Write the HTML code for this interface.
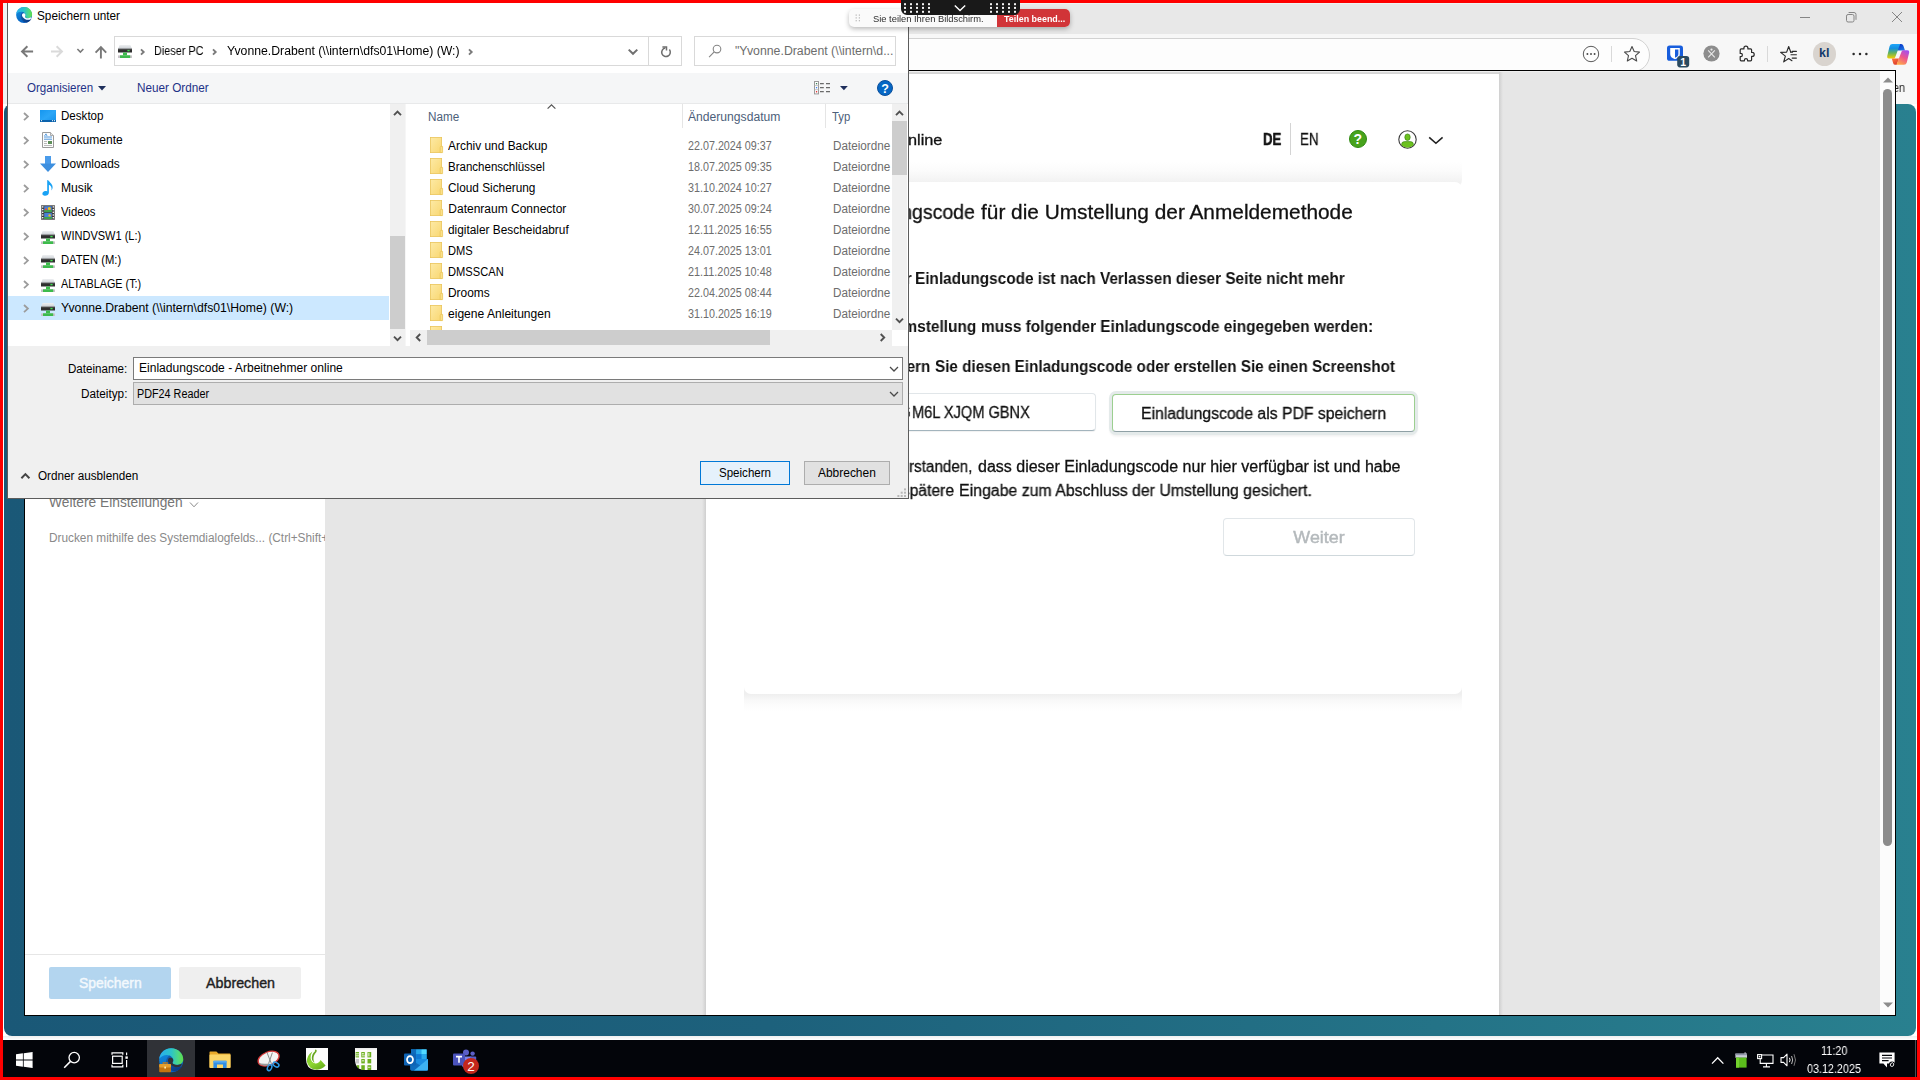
<!DOCTYPE html>
<html><head><meta charset="utf-8"><title>Speichern unter</title>
<style>
*{box-sizing:border-box;margin:0;padding:0}
html,body{width:1920px;height:1080px;overflow:hidden;background:#fff;font-family:"Liberation Sans",sans-serif;}
.a{position:absolute}
.t{position:absolute;white-space:nowrap;line-height:1;font-size:12px;color:#000}
svg{position:absolute;overflow:visible}
.g{will-change:transform}
</style></head><body>
<!-- ===== Edge window background ===== -->
<div class="a" style="left:0;top:0;width:1920px;height:1080px;background:#fff"></div>
<div class="a" id="edge-title" style="left:3px;top:3px;width:1914px;height:31px;background:#e8e8e8"></div>
<div class="a" id="edge-tool" style="left:3px;top:34px;width:1914px;height:36px;background:#f7f7f7"></div>
<!-- page behind print dialog -->
<div class="a" style="left:3px;top:70px;width:1914px;height:34px;background:#f7f7f7"></div>
<div class="a" id="teal" style="left:4px;top:104px;width:1912px;height:932px;border-radius:8px 8px 8px 8px;background:linear-gradient(90deg,#1a5877 0%,#1d617c 40%,#29808f 100%)"></div>
<div class="a" style="left:3px;top:3px;width:1914px;height:1px;background:#eef3f3"></div>
<svg style="left:1795px;top:8px" width="115" height="20" viewBox="0 0 115 20"><g fill="none" stroke="#858585" stroke-width="1"><path d="M5 9.5 H15"/><rect x="51.5" y="6.5" width="7.5" height="7.5" rx="1.6"/><path d="M53.6 4.5 H59 Q61 4.5 61 6.5 V11.8"/><path d="M97 4 L107 14 M107 4 L97 14"/></g></svg>
<div class="a" style="left:200px;top:38px;width:1450px;height:34px;border:1px solid #d2d2d2;border-radius:17px;background:#fdfdfd"></div>
<svg style="left:1582px;top:45px" width="18" height="18" viewBox="0 0 18 18"><circle cx="9" cy="9" r="7.7" fill="none" stroke="#5a5a5a" stroke-width="1"/><circle cx="5.4" cy="9" r="0.95" fill="#444"/><circle cx="9" cy="9" r="0.95" fill="#444"/><circle cx="12.6" cy="9" r="0.95" fill="#444"/></svg>
<div class="a" style="left:1611px;top:46px;width:1px;height:16px;background:#d9d9d9"></div>
<svg style="left:1623px;top:45px" width="18" height="18" viewBox="0 0 18 18"><path d="M9 1.6 L11.2 6.5 L16.5 7.1 L12.5 10.7 L13.7 16 L9 13.2 L4.3 16 L5.5 10.7 L1.5 7.1 L6.8 6.5 Z" fill="none" stroke="#4a4a4a" stroke-width="1.1" stroke-linejoin="round"/></svg>
<svg style="left:1666px;top:45.2px" width="24" height="23" viewBox="0 0 24 23"><rect x="1" y="0.6" width="16" height="15.2" rx="2.6" fill="#175ddc"/><path d="M4.2 3 H13.8 V9 Q13.8 12.8 9 14.2 Q4.2 12.8 4.2 9Z" fill="#fff"/><path d="M9 4.4 H12.4 V9 Q12.4 11.6 9 12.8Z" fill="#175ddc"/><rect x="11.2" y="11" width="12" height="11.4" rx="2.8" fill="#2a4a60"/></svg>
<span class="t" style="top:57px;left:1683.20px;transform:translateX(-50%);transform-origin:50% 0;font-size:10.5px;color:#fff;font-weight:700;">1</span>
<svg style="left:1702.6px;top:45.3px" width="17" height="17" viewBox="0 0 17 17"><circle cx="8.5" cy="8.5" r="8.1" fill="#8d8d8d"/><path d="M5.2 12.4 L11.8 5.4 M11.8 12.4 L5.2 5.4" stroke="#e8e8e8" stroke-width="1.1"/><circle cx="8.5" cy="4.6" r="1.1" fill="#e8e8e8"/></svg>
<svg style="left:1737.4px;top:45px" width="18" height="18" viewBox="0 0 18 18"><path d="M6.9 3.9 V3.2 Q6.9 1.2 8.9 1.2 Q10.9 1.2 10.9 3.2 V3.9 H13.6 Q14.6 3.9 14.6 4.9 V7.4 H15.2 Q17.2 7.4 17.2 9.4 Q17.2 11.4 15.2 11.4 H14.6 V14.8 Q14.6 15.8 13.6 15.8 H10.6 V15.2 Q10.6 13.6 9 13.6 Q7.4 13.6 7.4 15.2 V15.8 H4.2 Q3.2 15.8 3.2 14.8 V11.6 H3.8 Q5.4 11.6 5.4 10 Q5.4 8.4 3.8 8.4 H3.2 V4.9 Q3.2 3.9 4.2 3.9 Z" fill="none" stroke="#2a2a2a" stroke-width="1.2" stroke-linejoin="round"/></svg>
<div class="a" style="left:1767px;top:46px;width:1px;height:16px;background:#d9d9d9"></div>
<svg style="left:1777.6px;top:44.6px" width="20" height="19" viewBox="0 0 20 19"><path d="M12.76 7.17 L10.70 1.50 L8.64 7.17 L2.62 7.37 L7.37 11.08 L5.70 16.88 L10.70 13.50 L13.95 15.69" fill="none" stroke="#2a2a2a" stroke-width="1.15" stroke-linejoin="round" stroke-linecap="round"/><path d="M12.76 7.17 L14.57 7.23" fill="none" stroke="#2a2a2a" stroke-width="1.15" stroke-linecap="round"/><path d="M14.2 6.4 H18.4 M13 9.7 H18.4 M14.2 13.1 H18.4" stroke="#2a2a2a" stroke-width="1.15" stroke-linecap="round"/></svg>
<div class="a" style="left:1812.5px;top:42.2px;width:23.4px;height:23.4px;border-radius:50%;background:#d9d4cf"></div>
<span class="t" style="top:47px;left:1824.20px;transform:translateX(-50%);transform-origin:50% 0;font-size:12.5px;color:#123a6b;font-weight:700;">kl</span>
<svg style="left:1850px;top:51px" width="20" height="6"><circle cx="3.6" cy="3" r="1.25" fill="#2a2a2a"/><circle cx="10" cy="3" r="1.25" fill="#2a2a2a"/><circle cx="16.4" cy="3" r="1.25" fill="#2a2a2a"/></svg>
<svg style="left:1887px;top:43.6px" width="22.4" height="20.8" viewBox="0 0 22.4 20.8"><defs>
<linearGradient id="cpa" x1="0" y1="0" x2="0" y2="1"><stop offset="0" stop-color="#1fa6fa"/><stop offset=".3" stop-color="#1290e0"/><stop offset=".62" stop-color="#63b35e"/><stop offset="1" stop-color="#f2cf00"/></linearGradient>
<linearGradient id="cpb" x1="0.2" y1="0" x2="0.8" y2="1"><stop offset="0" stop-color="#0730c4"/><stop offset="1" stop-color="#1f7ae6"/></linearGradient>
<linearGradient id="cpc" x1="0.8" y1="0" x2="0.3" y2="1"><stop offset="0" stop-color="#a04df5"/><stop offset=".5" stop-color="#ef558c"/><stop offset="1" stop-color="#ffa848"/></linearGradient>
<linearGradient id="cpd" x1="0" y1="0" x2="0.6" y2="1"><stop offset="0" stop-color="#ff7a3c"/><stop offset="1" stop-color="#dc3a2c"/></linearGradient></defs>
<path d="M11 1.2 Q11.6 0 13 0 H14.2 Q15.8 0 16.4 1.8 L18 6.4 H10.4Z" fill="url(#cpb)"/>
<path d="M5.4 0 H13.2 L8.2 13.2 Q7.8 14.4 6.4 14.4 H1.8 Q-0.2 14.4 0.2 12.2 L2.6 2.2 Q3.2 0 5.4 0Z" fill="url(#cpa)"/>
<path d="M4.8 14.4 H12 L9.8 20.8 H8.2 Q6.6 20.8 6.2 19.2Z" fill="url(#cpd)"/>
<path d="M14.6 7.4 Q15 6.2 16.4 6.2 H20.4 Q22.6 6.2 22.2 8.4 L19.8 18.6 Q19.2 20.8 17 20.8 H9.4Z" fill="url(#cpc)"/>
</svg>
<span class="t g" style="top:82px;left:1893.30px;transform:scaleX(0.8908);transform-origin:0 0;color:#222;">en</span>
<!-- ===== Print dialog (in-page) ===== -->
<div class="a" id="print" style="left:24px;top:70px;width:1872px;height:946px;background:#e6e6e6;border:1px solid #000"></div>
<div class="a" id="print-left" style="left:25px;top:71px;width:300px;height:944px;background:#fff"></div>
<div class="a" style="left:25px;top:954px;width:300px;height:1px;background:#e6e6e6"></div>
<div class="a" style="left:49px;top:967px;width:122px;height:32px;background:#b3d5ef;border-radius:2px"></div>
<div class="a" style="left:179px;top:967px;width:122px;height:32px;background:#efefef;border-radius:2px"></div>
<!-- preview scrollbar -->
<div class="a" style="left:1880px;top:71px;width:15px;height:944px;background:#fcfcfc"></div>
<div class="a" style="left:1883px;top:89px;width:9px;height:757px;background:#8c8c8c;border-radius:5px"></div>
<svg style="left:1883px;top:77px" width="10" height="6"><path d="M0 5.5 L5 0.5 L10 5.5Z" fill="#8c8c8c"/></svg>
<svg style="left:1883px;top:1001.8px" width="10" height="6"><path d="M0 0.5 L5 5.5 L10 0.5Z" fill="#8c8c8c"/></svg>
<!-- preview page -->
<div class="a" style="left:25px;top:71px;width:1855px;height:1px;background:#efefef"></div>
<div class="a" style="left:706px;top:72px;width:793px;height:2px;background:linear-gradient(180deg,#dcdcdc,#d2d2d2)"></div>
<div class="a" id="pv" style="left:706px;top:74px;width:793px;height:941px;background:#fff"></div>
<span class="t" style="top:494px;left:49.30px;transform:scaleX(0.9179);transform-origin:0 0;font-size:15px;color:#767676;">Weitere Einstellungen</span>
<svg style="left:189px;top:500.7px" width="10" height="8"><path d="M1 1.5 L5 5.8 L9 1.5" fill="none" stroke="#8a8a8a" stroke-width="1"/></svg>
<div class="a" style="left:49px;top:528px;width:276px;height:20px;overflow:hidden"><span class="t" style="top:4px;left:0.40px;transform:scaleX(0.9849);transform-origin:0 0;color:#8a8a8a;">Drucken mithilfe des Systemdialogfelds... (Ctrl+Shift+P)</span></div>
<span class="t" style="top:976px;left:78.70px;transform:scaleX(0.9945);transform-origin:0 0;font-size:14px;color:#f3f9fd;-webkit-text-stroke:0.4px #f3f9fd;">Speichern</span>
<span class="t" style="top:976px;left:205.50px;transform:scaleX(1.0189);transform-origin:0 0;font-size:14px;color:#1f1f1f;-webkit-text-stroke:0.4px #1f1f1f;">Abbrechen</span>
<div class="a" style="left:1499px;top:72px;width:4px;height:943px;background:linear-gradient(90deg,#cfcfcf,#e6e6e6)"></div>
<div class="a" style="left:702px;top:72px;width:4px;height:943px;background:linear-gradient(270deg,#cfcfcf,#e6e6e6)"></div>
<span class="t g" style="top:132px;left:908.40px;transform:scaleX(1.0851);transform-origin:0 0;font-size:15px;color:#111;-webkit-text-stroke:0.3px #111;">nline</span>
<span class="t g" style="top:132px;left:1263.30px;transform:scaleX(0.8230);transform-origin:0 0;font-size:16px;color:#111;font-weight:700;-webkit-text-stroke:0.6px #111;">DE</span>
<div class="a" style="left:1290px;top:123px;width:1px;height:32px;background:#d4d4d4"></div>
<span class="t g" style="top:132px;left:1299.50px;transform:scaleX(0.8320);transform-origin:0 0;font-size:16px;color:#111;-webkit-text-stroke:0.3px #111;">EN</span>
<div class="a" style="left:1348.5px;top:129.5px;width:18.5px;height:18.5px;border-radius:50%;background:#47a31c;border:1.2px solid #2f8a12"></div>
<span class="t" style="top:132px;left:1357.80px;transform:translateX(-50%);transform-origin:50% 0;font-size:14px;color:#fff;font-weight:700;">?</span>
<svg style="left:1398px;top:129.5px" width="19" height="19" viewBox="0 0 19 19"><defs><clipPath id="uc"><circle cx="9.5" cy="9.5" r="8.2"/></clipPath></defs>
<circle cx="9.5" cy="9.5" r="8.7" fill="#fff" stroke="#3a3a3a" stroke-width="1.1"/>
<g clip-path="url(#uc)"><ellipse cx="9.5" cy="7.2" rx="2.7" ry="3.3" fill="#6cc11f" stroke="#2f7d0a" stroke-width="0.6"/><path d="M3.6 19 V14.4 Q3.6 11.6 6.6 11.6 H12.4 Q15.4 11.6 15.4 14.4 V19Z" fill="#6cc11f" stroke="#2f7d0a" stroke-width="0.6"/></g></svg>
<svg style="left:1428px;top:136px" width="16" height="9" viewBox="0 0 16 9"><path d="M1.2 1.3 L7.9 7.3 L14.6 1.3" fill="none" stroke="#222" stroke-width="1.6"/></svg>
<div class="a" style="left:744px;top:162px;width:718px;height:26px;border-radius:0 0 8px 8px;background:linear-gradient(180deg,#ffffff 0,#fbfbfb 9px,#f2f2f2 20px,#f2f2f2 26px)"></div>
<div class="a" style="left:744px;top:686px;width:718px;height:26px;background:linear-gradient(180deg,#efefef 0,#efefef 8px,#f8f8f8 14px,#fdfdfd 21px,#ffffff 26px)"></div>
<div class="a" style="left:744px;top:182px;width:718px;height:512px;background:#fff;border-radius:7px"></div>
<span class="t g" style="top:202px;left:980.50px;transform:scaleX(1.0164);transform-origin:0 0;font-size:20.5px;color:#111;-webkit-text-stroke:0.3px #111;">für die Umstellung der Anmeldemethode</span>
<span class="t g" style="top:202px;right:945.30px;transform:scaleX(0.9510);transform-origin:100% 0;font-size:20.5px;color:#111;-webkit-text-stroke:0.3px #111;">Einladungscode</span>
<span class="t g" style="top:271px;left:915.30px;transform:scaleX(0.9588);transform-origin:0 0;font-size:16px;color:#111;font-weight:700;">Einladungscode ist nach Verlassen dieser Seite nicht mehr</span>
<span class="t g" style="top:271px;right:1008.70px;transform:scaleX(0.9600);transform-origin:100% 0;font-size:16px;color:#111;font-weight:700;">Der</span>
<span class="t g" style="top:319px;left:980.60px;transform:scaleX(0.9651);transform-origin:0 0;font-size:16px;color:#111;font-weight:700;">muss folgender Einladungscode eingegeben werden:</span>
<span class="t g" style="top:319px;right:944.00px;transform:scaleX(0.9650);transform-origin:100% 0;font-size:16px;color:#111;font-weight:700;">Zur Umstellung</span>
<span class="t g" style="top:359px;left:935.00px;transform:scaleX(0.9527);transform-origin:0 0;font-size:16px;color:#111;font-weight:700;">Sie diesen Einladungscode oder erstellen Sie einen Screenshot</span>
<span class="t g" style="top:359px;right:990.00px;transform:scaleX(0.9530);transform-origin:100% 0;font-size:16px;color:#111;font-weight:700;">Speichern</span>
<div class="a" style="left:800px;top:393px;width:296px;height:38px;background:#fff;border:1px solid #e1e6e9;border-bottom-color:#a3b4bd;border-radius:4px;box-shadow:0 1px 1px rgba(0,0,0,.06)"></div>
<span class="t g" style="top:404px;left:911.70px;transform:scaleX(0.8841);transform-origin:0 0;font-size:16.5px;color:#111;-webkit-text-stroke:0.3px #111;">M6L XJQM GBNX</span>
<span class="t g" style="top:404px;right:1009.20px;transform:scaleX(0.8840);transform-origin:100% 0;font-size:16.5px;color:#111;-webkit-text-stroke:0.3px #111;">G</span>
<div class="a" style="left:1112px;top:394px;width:303px;height:38px;background:#fff;border:1px solid #9ccf90;border-bottom-color:#8fa0a5;border-radius:4px;box-shadow:0 0 0 3px #e4eaea, 0 2px 3px 2px rgba(0,0,0,.08)"></div>
<span class="t g" style="top:406px;left:1140.60px;transform:scaleX(0.9842);transform-origin:0 0;font-size:16px;color:#111;-webkit-text-stroke:0.3px #111;">Einladungscode als PDF speichern</span>
<span class="t g" style="top:459px;left:977.70px;font-size:16px;color:#111;-webkit-text-stroke:0.3px #111;">dass dieser Einladungscode nur hier verfügbar ist und habe</span>
<span class="t g" style="top:459px;right:947.70px;transform:scaleX(0.9500);transform-origin:100% 0;font-size:16px;color:#111;-webkit-text-stroke:0.3px #111;">Ich habe verstanden,</span>
<span class="t g" style="top:483px;left:959.00px;transform:scaleX(0.9923);transform-origin:0 0;font-size:16px;color:#111;-webkit-text-stroke:0.3px #111;">Eingabe zum Abschluss der Umstellung gesichert.</span>
<span class="t g" style="top:483px;right:965.80px;transform:scaleX(0.9800);transform-origin:100% 0;font-size:16px;color:#111;-webkit-text-stroke:0.3px #111;">ihn für die spätere</span>
<div class="a" style="left:1223px;top:518px;width:192px;height:38px;background:#fff;border:1px solid #e1e6e9;border-bottom-color:#cfd8dc;border-radius:4px"></div>
<span class="t g" style="top:529px;left:1319.00px;transform:translateX(-50%) scaleX(1.0500);transform-origin:50% 0;font-size:17px;color:#b4b9bc;-webkit-text-stroke:0.45px #b4b9bc;">Weiter</span>
<!-- ===== Taskbar ===== -->
<div class="a" style="left:3px;top:1036px;width:1914px;height:4px;background:linear-gradient(180deg,#efefef,#ffffff)"></div>
<div class="a" id="taskbar" style="left:3px;top:1040px;width:1914px;height:37px;background:#03050a"></div>
<div class="a" style="left:147px;top:1040px;width:48px;height:37px;background:#303237"></div>
<svg style="left:15.5px;top:1052px" width="17" height="16" viewBox="0 0 17 16"><g fill="#fff"><path d="M0 2.3 L6.9 1.3 V7.6 H0Z"/><path d="M7.7 1.2 L16.6 0 V7.6 H7.7Z"/><path d="M0 8.4 H6.9 V14.7 L0 13.7Z"/><path d="M7.7 8.4 H16.6 V16 L7.7 14.8Z"/></g></svg>
<svg style="left:63px;top:1051px" width="18" height="18" viewBox="0 0 18 18"><circle cx="11.2" cy="6.6" r="5.2" fill="none" stroke="#fff" stroke-width="1.3"/><path d="M7.5 10.4 L1.2 16.8" stroke="#fff" stroke-width="1.5"/></svg>
<svg style="left:111px;top:1052px" width="18" height="16" viewBox="0 0 18 16"><g fill="none" stroke="#fff" stroke-width="1.2"><rect x="1.6" y="4.2" width="9.6" height="7.2"/><path d="M1 2.8 V0.8 H11.8 V2.8 M1 12.8 V14.8 H11.8 V12.8"/><path d="M15.6 0.4 V3.2 M15.6 8 V15.2"/></g><rect x="14.4" y="4.4" width="2.4" height="2.4" fill="#fff"/></svg>
<svg style="left:159px;top:1048px" width="24.4" height="24.4" viewBox="0 0 16 16"><defs><linearGradient id="tea" x1="0" y1="0" x2="1" y2="0"><stop offset="0" stop-color="#2aaef0"/><stop offset=".5" stop-color="#2cc4c8"/><stop offset=".8" stop-color="#4fd982"/><stop offset="1" stop-color="#5fde45"/></linearGradient><linearGradient id="teb" x1="0" y1="0" x2="0.4" y2="1"><stop offset="0" stop-color="#1696e2"/><stop offset="1" stop-color="#0560c2"/></linearGradient><linearGradient id="tec" x1="0" y1="0" x2="1" y2="1"><stop offset="0" stop-color="#1562b4"/><stop offset="1" stop-color="#08347e"/></linearGradient></defs><circle cx="8" cy="8" r="7.9" fill="url(#teb)"/><path d="M0.15 7.2 C0.6 3 4 0.1 8 0.1 C12.6 0.1 16 3.6 15.9 7.6 C15.8 10 14 11 12.2 11 C10.6 11 9 10.6 8.9 9.6 C9.8 8.6 9.6 7.2 8.6 6 C7.2 4.4 4.4 4.2 2.4 5.2 C1.2 5.8 0.5 6.6 0.15 7.2Z" fill="url(#tea)"/><path d="M6.4 5.2 C4.8 6.4 4.2 8.6 4.9 10.8 C5.9 14 9 15.9 11.4 15.1 C13 14.5 14.4 13.2 15.2 11.9 C13.6 12.7 11.4 12.8 9.6 12 C7.4 11 6.2 9.2 6.6 7.4 C6.8 6.4 7.4 5.8 8 5.6 C7.5 5.2 6.9 5 6.4 5.2Z" fill="url(#tec)"/><path d="M5.9 8.2 C5.9 6.8 6.9 6 7.9 6.2 C8.9 6.4 9.5 7.4 9.3 8.4 C9.1 9.2 8.8 9.3 8.9 9.9 C9.1 10.7 10.6 11.2 12.2 11.1 C13.4 11 14.4 10.6 15 10.2 C14.9 10.9 14.7 11.5 14.4 12 C12.8 12.8 10.8 12.8 9.2 12 C7.2 11 5.9 9.6 5.9 8.2Z" fill="#303237"/></svg>
<svg style="left:159px;top:1062px" width="13" height="11" viewBox="0 0 13 11"><path d="M4.2 2.2 V0.9 H8.2 V2.2" fill="none" stroke="#c97c14" stroke-width="1.1"/><rect x="0.2" y="2" width="11.8" height="8.2" rx="1" fill="#c4740f"/><rect x="0.2" y="2" width="11.8" height="3.6" rx="1" fill="#e59f2e"/><rect x="5.3" y="4.6" width="1.7" height="1.9" fill="#ffe9a8"/></svg>
<svg style="left:209px;top:1051px" width="22" height="18" viewBox="0 0 22 18"><path d="M0.5 1.2 Q0.5 0.4 1.3 0.4 H7.4 L9.4 2.4 H20.7 Q21.5 2.4 21.5 3.2 V16.6 H0.5Z" fill="#e8a92a"/><rect x="0.5" y="3.6" width="21" height="13.4" rx="0.8" fill="#fbd568"/><path d="M4.4 17 V10.6 Q4.4 9.8 5.2 9.8 H16.8 Q17.6 9.8 17.6 10.6 V17 H14 V13.6 H8 V17Z" fill="#2f8de4"/><rect x="4.4" y="9.8" width="13.2" height="1.8" fill="#57aaf0"/></svg>
<svg style="left:257px;top:1049px" width="25" height="23" viewBox="0 0 25 23"><ellipse cx="11.6" cy="9.6" rx="11" ry="6.6" transform="rotate(-22 11.6 9.6)" fill="#f3f3f3" stroke="#d93a3a" stroke-width="1.3"/><path d="M1.6 13.6 Q4 17.6 11 16.6 L12.6 14.4 Q5 15.6 1.6 13.6Z" fill="#9a9a9a"/><path d="M10 3.6 L14.4 14.6 M15.4 3.6 L11.6 14.6" stroke="#8a8a8a" stroke-width="1"/><ellipse cx="12.6" cy="18.6" rx="2" ry="3.2" transform="rotate(25 12.6 18.6)" fill="none" stroke="#2e9be6" stroke-width="1.5"/><ellipse cx="19" cy="15.6" rx="2" ry="3.2" transform="rotate(-60 19 15.6)" fill="none" stroke="#2e9be6" stroke-width="1.5"/></svg>
<svg style="left:306px;top:1048px" width="22" height="22" viewBox="0 0 22 22"><defs><linearGradient id="ga" x1="0" y1="0" x2="0.6" y2="1"><stop offset="0" stop-color="#7cc52a"/><stop offset=".6" stop-color="#8fd833"/><stop offset="1" stop-color="#6db31e"/></linearGradient></defs>
<path d="M0 0 H22 V22 H9 Q0 21 0 11Z" fill="#fdfdfd"/>
<path d="M6.4 3.4 Q0 8 1 14 Q3 21.6 11 21.8 Q16 21.6 19.6 17.6 L14.6 12 Q12.8 15.6 9.4 15.4 Q5.2 14.6 4.6 10 Q4.4 6.6 6.4 3.4Z" fill="url(#ga)"/>
<path d="M9.4 1.4 Q11.4 1.8 10.4 4 Q6.6 8 7.6 12.6 Q8 14 9 14.4 Q6 14 5.8 10 Q5.8 6 9 3.2 Q8.6 2 9.4 1.4Z" fill="#6aa823"/>
</svg>
<svg style="left:355px;top:1048px" width="22" height="22" viewBox="0 0 22 22"><path d="M0 0 H22 V22 H7 Q0 20 0 13Z" fill="#fbfbf9"/><rect x="0" y="0" width="22" height="1.6" fill="#ebebeb"/>
<g fill="#6cb01e"><rect x="0.6" y="4" width="3.4" height="5.4"/><rect x="6.3" y="4" width="3.5" height="5.4"/><rect x="12.5" y="4" width="3.7" height="5.4"/><rect x="6.3" y="11" width="3.5" height="4.4"/><rect x="12.5" y="11" width="3.7" height="4.4"/><rect x="1.6" y="17.2" width="2.6" height="4.8"/><rect x="6.3" y="17.2" width="3.5" height="4.8"/><rect x="12.5" y="17.2" width="3.7" height="4.8"/></g>
<g fill="#f4f8ec"><rect x="0.6" y="5.4" width="3.4" height="0.9"/><rect x="0.6" y="7.4" width="3.4" height="0.9"/><rect x="7" y="5.2" width="1.8" height="1.2"/><rect x="7" y="7.4" width="2.8" height="0.9"/><rect x="13.4" y="4.8" width="1" height="3.6"/><rect x="7" y="12.4" width="2" height="0.9"/><rect x="13" y="18.8" width="2.4" height="0.9"/></g>
<rect x="0.6" y="11" width="3.4" height="4.4" fill="#c9c9c9"/><path d="M0 13 Q0 20 7 22 H0Z" fill="#03050a"/></svg>
<svg style="left:404px;top:1049px" width="24" height="22" viewBox="0 0 24 22"><rect x="7" y="0.4" width="15.6" height="14" fill="#1490df"/><rect x="7" y="0.4" width="5.2" height="4.8" fill="#0f6cbd"/><rect x="12.2" y="0.4" width="5.2" height="4.8" fill="#28a8ea"/><rect x="17.4" y="0.4" width="5.2" height="4.8" fill="#50d9ff"/><rect x="17.4" y="5.2" width="5.2" height="4.8" fill="#28a8ea"/><rect x="12.2" y="5.2" width="5.2" height="4.8" fill="#0f78d4"/>
<path d="M6.4 10.4 L24 10 V20 Q24 21.6 22.4 21.6 H8 Q6.4 21.6 6.4 20Z" fill="#1a8ce0"/><path d="M6.4 10.4 L24 21 Q23.6 21.6 22.4 21.6 H8 Q6.4 21.6 6.4 20Z" fill="#0f6cbd"/><path d="M24 10 L10 21.6 H22.4 Q24 21.6 24 20Z" fill="#3db2f2"/>
<rect x="0" y="4.6" width="12" height="12" rx="1" fill="#0f64b5"/><ellipse cx="6" cy="10.6" rx="3" ry="3.5" fill="none" stroke="#fff" stroke-width="1.7"/></svg>
<svg style="left:453px;top:1049px" width="26" height="26" viewBox="0 0 26 26"><circle cx="13" cy="3.4" r="3" fill="#5b5fc7"/><circle cx="19.6" cy="4.6" r="2.2" fill="#5b5fc7"/><path d="M8.8 7.6 H17.8 Q18.6 7.6 18.6 8.4 V14.4 Q18.6 19 13.4 19 Q8.8 19 8.8 14.4Z" fill="#7b83eb"/><path d="M17.2 7.6 H22.4 Q23.2 7.6 23.2 8.4 V13 Q23.2 16.4 20.2 16.4 Q18.2 16.4 17.2 14Z" fill="#5b5fc7"/><rect x="0" y="4.6" width="12" height="12" rx="1" fill="#4b53bc"/><path d="M3 7.6 H9 M6 7.6 V13.8" stroke="#fff" stroke-width="1.6"/><circle cx="18" cy="17" r="8" fill="#c4271b"/></svg>
<span class="t" style="top:1060px;left:471.00px;transform:translateX(-50%);transform-origin:50% 0;font-size:13.5px;color:#fff;">2</span>
<svg style="left:1710.5px;top:1055.5px" width="14" height="9"><path d="M1 7.6 L6.7 1.8 L12.4 7.6" fill="none" stroke="#fff" stroke-width="1.3"/></svg>
<svg style="left:1735px;top:1051.5px" width="13" height="16" viewBox="0 0 13 16"><rect x="0.4" y="1.6" width="11.6" height="4.2" fill="#c9ccd6"/><rect x="0.4" y="1.6" width="11.6" height="1.6" fill="#8e93a6"/><rect x="9.6" y="0.2" width="1" height="2" fill="#c9ccd6"/><rect x="1" y="5.6" width="10.6" height="10" fill="#5bbd1c"/><rect x="1" y="5.6" width="3" height="10" fill="#74d22e"/></svg>
<svg style="left:1757px;top:1053.5px" width="17" height="14" viewBox="0 0 17 14"><g fill="none" stroke="#fff" stroke-width="1.1"><path d="M4.6 1 H16 V9.4 H3.2 V4.6"/><path d="M9.4 9.4 V12.8 M6 12.9 H13"/><rect x="0.6" y="0.6" width="4" height="4"/></g><rect x="1.8" y="1.8" width="1.6" height="1.6" fill="#fff"/></svg>
<svg style="left:1780px;top:1053px" width="18" height="14" viewBox="0 0 18 14"><path d="M1 4.6 H3.6 L7 1.2 V12.8 L3.6 9.4 H1Z" fill="none" stroke="#fff" stroke-width="1.1" stroke-linejoin="round"/><path d="M9.4 4.8 Q10.8 7 9.4 9.2" fill="none" stroke="#fff" stroke-width="1"/><path d="M11.6 3 Q13.8 7 11.6 11" fill="none" stroke="#bfbfbf" stroke-width="1"/><path d="M14 1.2 Q17 7 14 12.8" fill="none" stroke="#7a7a7a" stroke-width="1"/></svg>
<span class="t g" style="top:1045px;left:1820.60px;transform:scaleX(0.9060);transform-origin:0 0;color:#fff;">11:20</span>
<span class="t g" style="top:1063px;left:1806.80px;transform:scaleX(0.8974);transform-origin:0 0;color:#fff;">03.12.2025</span>
<svg style="left:1879px;top:1052px" width="17" height="17" viewBox="0 0 17 17"><path d="M0.4 0.4 H15.6 V11.6 H8 L8 15.4 L4.4 11.6 H0.4Z" fill="#fff"/><path d="M3 3.4 H13 M3 6 H13 M3 8.6 H9.6" stroke="#03050a" stroke-width="1.1"/><circle cx="13" cy="12.6" r="3.1" fill="#03050a"/><path d="M11.4 13.8 Q10.6 11.2 13.6 10.6 Q15.6 11.6 14.4 13.8 Q13 15.2 11.4 13.8Z" fill="none" stroke="#fff" stroke-width="0.9"/></svg>
<div class="a" style="left:1915px;top:1040px;width:1px;height:37px;background:#4a4d53"></div>
<!-- ===== Save dialog ===== -->
<div class="a" id="dlg" style="left:7px;top:3px;width:902px;height:496px;background:#fff;border:1px solid #5c5c5c;border-top:none"></div>
<div class="a" style="left:3px;top:3px;width:4px;height:101px;background:#f0f1f1"></div>
<div class="a" style="left:8px;top:73px;width:900px;height:30px;background:#f5f6f7"></div>
<div class="a" style="left:8px;top:103px;width:900px;height:1px;background:#e8e9ea"></div>
<div class="a" style="left:8px;top:346px;width:900px;height:152px;background:#f0f0f0"></div>
<svg style="left:16px;top:7px" width="16.2" height="16.2" viewBox="0 0 16 16"><defs><linearGradient id="eda" x1="0" y1="0" x2="1" y2="0"><stop offset="0" stop-color="#2aaef0"/><stop offset=".5" stop-color="#2cc4c8"/><stop offset=".8" stop-color="#4fd982"/><stop offset="1" stop-color="#5fde45"/></linearGradient><linearGradient id="edb" x1="0" y1="0" x2="0.4" y2="1"><stop offset="0" stop-color="#1696e2"/><stop offset="1" stop-color="#0560c2"/></linearGradient><linearGradient id="edc" x1="0" y1="0" x2="1" y2="1"><stop offset="0" stop-color="#1562b4"/><stop offset="1" stop-color="#08347e"/></linearGradient></defs><circle cx="8" cy="8" r="7.9" fill="url(#edb)"/><path d="M0.15 7.2 C0.6 3 4 0.1 8 0.1 C12.6 0.1 16 3.6 15.9 7.6 C15.8 10 14 11 12.2 11 C10.6 11 9 10.6 8.9 9.6 C9.8 8.6 9.6 7.2 8.6 6 C7.2 4.4 4.4 4.2 2.4 5.2 C1.2 5.8 0.5 6.6 0.15 7.2Z" fill="url(#eda)"/><path d="M6.4 5.2 C4.8 6.4 4.2 8.6 4.9 10.8 C5.9 14 9 15.9 11.4 15.1 C13 14.5 14.4 13.2 15.2 11.9 C13.6 12.7 11.4 12.8 9.6 12 C7.4 11 6.2 9.2 6.6 7.4 C6.8 6.4 7.4 5.8 8 5.6 C7.5 5.2 6.9 5 6.4 5.2Z" fill="url(#edc)"/><path d="M5.9 8.2 C5.9 6.8 6.9 6 7.9 6.2 C8.9 6.4 9.5 7.4 9.3 8.4 C9.1 9.2 8.8 9.3 8.9 9.9 C9.1 10.7 10.6 11.2 12.2 11.1 C13.4 11 14.4 10.6 15 10.2 C14.9 10.9 14.7 11.5 14.4 12 C12.8 12.8 10.8 12.8 9.2 12 C7.2 11 5.9 9.6 5.9 8.2Z" fill="#fff"/></svg>
<span class="t" style="top:10px;left:37.00px;transform:scaleX(0.9795);transform-origin:0 0;">Speichern unter</span>
<svg style="left:20px;top:43.5px" width="100" height="16" viewBox="0 0 100 16">
<g fill="none" stroke-width="1.9" stroke-linecap="butt">
<path d="M13.1 7.5 H2 M7.4 2.2 L2 7.5 L7.4 12.8" stroke="#787878"/>
<path d="M31 7.5 H42 M36.6 2.2 L42 7.5 L36.6 12.8" stroke="#dadada"/>
<path d="M57.4 5 L60.4 8 L63.4 5" stroke="#7a7a7a" stroke-width="1.6"/>
<path d="M80.9 14.4 V3.2 M75.6 8.6 L80.9 3.2 L86.2 8.6" stroke="#787878"/>
</g></svg>
<div class="a" style="left:114px;top:36px;width:568px;height:30px;border:1px solid #d9d9d9;background:#fff"></div>
<div class="a" style="left:648px;top:37px;width:1px;height:28px;background:#d9d9d9"></div>
<svg style="left:118px;top:45px" width="14" height="13" viewBox="0 0 14 13"><defs><linearGradient id="dvg" x1="0" y1="0" x2="0" y2="1"><stop offset="0" stop-color="#eef0f2"/><stop offset="1" stop-color="#c9ced3"/></linearGradient></defs><path d="M1.6 0 H12.4 L14 3.9 H0Z" fill="url(#dvg)"/><rect x="0" y="3.8" width="14" height="3.7" fill="#2f2f2f"/><rect x="0" y="3.8" width="14" height="0.7" fill="#5a5a5a"/><rect x="9.4" y="4.9" width="2.2" height="1.4" fill="#3fe04f"/><rect x="5" y="7.5" width="4" height="3" fill="#3dbb4c"/><rect x="0" y="10.4" width="14" height="2.6" fill="#c9c3c9"/><rect x="2" y="10.3" width="10.2" height="2.7" fill="#3dbb4c"/></svg>
<svg style="left:139.8px;top:46.6px" width="8" height="10" viewBox="0 0 8 10"><path d="M1 2.3 L3.7 5 L1 7.7" fill="none" stroke="#7a7a7a" stroke-width="1.9"/></svg>
<span class="t g" style="top:45px;left:154.30px;transform:scaleX(0.9051);transform-origin:0 0;">Dieser PC</span>
<svg style="left:212.2px;top:46.6px" width="8" height="10" viewBox="0 0 8 10"><path d="M1 2.3 L3.7 5 L1 7.7" fill="none" stroke="#7a7a7a" stroke-width="1.9"/></svg>
<span class="t g" style="top:45px;left:227.00px;transform:scaleX(1.0207);transform-origin:0 0;">Yvonne.Drabent (\\intern\dfs01\Home) (W:)</span>
<svg style="left:467.8px;top:46.6px" width="8" height="10" viewBox="0 0 8 10"><path d="M1 2.3 L3.7 5 L1 7.7" fill="none" stroke="#7a7a7a" stroke-width="1.9"/></svg>
<svg style="left:627px;top:48.2px" width="12" height="8" viewBox="0 0 12 8"><path d="M1.7 1.6 L6 5.8 L10.3 1.6" fill="none" stroke="#707070" stroke-width="2"/></svg>
<svg style="left:659px;top:44px" width="14" height="14" viewBox="0 0 14 14"><path d="M6.25 3.97 A4.3 4.3 0 1 0 10.39 5.55" fill="none" stroke="#6e6e6e" stroke-width="1.5"/><path d="M3.4 2.9 H7.5 V6.6" fill="none" stroke="#6e6e6e" stroke-width="1.5"/></svg>
<div class="a" style="left:694px;top:36px;width:202px;height:30px;border:1px solid #d9d9d9;background:#fff"></div>
<svg style="left:708px;top:43.8px" width="14" height="14" viewBox="0 0 14 14"><circle cx="9" cy="5.1" r="3.8" fill="none" stroke="#858585" stroke-width="1.1"/><path d="M6.2 7.9 L1.1 13.2" stroke="#858585" stroke-width="1.1"/></svg>
<span class="t" style="top:45px;left:735.30px;transform:scaleX(1.0262);transform-origin:0 0;color:#6d6d6d;">"Yvonne.Drabent (\\intern\d...</span>
<span class="t" style="top:82px;left:26.50px;transform:scaleX(0.9636);transform-origin:0 0;color:#1e3287;">Organisieren</span>
<svg style="left:98px;top:85.5px" width="8" height="5"><path d="M0 0 H8 L4 4.6Z" fill="#1e2f5c"/></svg>
<span class="t" style="top:82px;left:137.30px;transform:scaleX(0.9772);transform-origin:0 0;color:#1e3287;">Neuer Ordner</span>
<svg style="left:814px;top:81px" width="17" height="14" viewBox="0 0 17 14">
<rect x="0.5" y="0.5" width="4" height="12.4" fill="#fff" stroke="#9a9a9a" stroke-width="1"/><path d="M0.5 4.6 H4.5 M0.5 8.7 H4.5" stroke="#b5b5b5" stroke-width="0.8"/>
<rect x="1.9" y="2" width="1.3" height="1.3" fill="#3f7f5a"/><rect x="1.9" y="6" width="1.3" height="1.3" fill="#3b82f6"/><rect x="1.9" y="10.1" width="1.3" height="1.3" fill="#e02424"/>
<g stroke="#6a6a6a" stroke-width="1.2"><path d="M6 2.6 H9.8 M12 2.6 H16 M6 6.6 H9.8 M12 6.6 H16 M6 10.6 H9.8 M12 10.6 H16"/></g></svg>
<svg style="left:839.6px;top:85.8px" width="9" height="5"><path d="M0 0 H7.8 L3.9 4.3Z" fill="#1e2f5c"/></svg>
<div class="a" style="left:877.1px;top:80px;width:16px;height:16px;border-radius:8px;background:#0667c4;border:1px solid #0b4f9c"></div>
<span class="t" style="top:83px;left:885.00px;transform:translateX(-50%);transform-origin:50% 0;font-size:12.5px;color:#fff;font-weight:700;">?</span>
<div class="a" style="left:8px;top:296px;width:381px;height:24px;background:#cce8ff"></div>
<svg style="left:23.3px;top:111.9px" width="8" height="10" viewBox="0 0 8 10"><path d="M1 1 L4.9 4.6 L1 8.2" fill="none" stroke="#9c9c9c" stroke-width="1.8"/></svg>
<span class="t" style="top:110px;left:61.30px;transform:scaleX(0.9652);transform-origin:0 0;">Desktop</span>
<svg style="left:23.3px;top:135.9px" width="8" height="10" viewBox="0 0 8 10"><path d="M1 1 L4.9 4.6 L1 8.2" fill="none" stroke="#9c9c9c" stroke-width="1.8"/></svg>
<span class="t" style="top:134px;left:61.30px;transform:scaleX(1.0053);transform-origin:0 0;">Dokumente</span>
<svg style="left:23.3px;top:159.9px" width="8" height="10" viewBox="0 0 8 10"><path d="M1 1 L4.9 4.6 L1 8.2" fill="none" stroke="#9c9c9c" stroke-width="1.8"/></svg>
<span class="t" style="top:158px;left:61.30px;transform:scaleX(0.9886);transform-origin:0 0;">Downloads</span>
<svg style="left:23.3px;top:183.9px" width="8" height="10" viewBox="0 0 8 10"><path d="M1 1 L4.9 4.6 L1 8.2" fill="none" stroke="#9c9c9c" stroke-width="1.8"/></svg>
<span class="t" style="top:182px;left:61.30px;transform:scaleX(1.0114);transform-origin:0 0;">Musik</span>
<svg style="left:23.3px;top:207.9px" width="8" height="10" viewBox="0 0 8 10"><path d="M1 1 L4.9 4.6 L1 8.2" fill="none" stroke="#9c9c9c" stroke-width="1.8"/></svg>
<span class="t" style="top:206px;left:61.30px;transform:scaleX(0.9456);transform-origin:0 0;">Videos</span>
<svg style="left:23.3px;top:231.9px" width="8" height="10" viewBox="0 0 8 10"><path d="M1 1 L4.9 4.6 L1 8.2" fill="none" stroke="#9c9c9c" stroke-width="1.8"/></svg>
<span class="t" style="top:230px;left:61.30px;transform:scaleX(0.9182);transform-origin:0 0;">WINDVSW1 (L:)</span>
<svg style="left:23.3px;top:255.9px" width="8" height="10" viewBox="0 0 8 10"><path d="M1 1 L4.9 4.6 L1 8.2" fill="none" stroke="#9c9c9c" stroke-width="1.8"/></svg>
<span class="t" style="top:254px;left:61.30px;transform:scaleX(0.9342);transform-origin:0 0;">DATEN (M:)</span>
<svg style="left:23.3px;top:279.9px" width="8" height="10" viewBox="0 0 8 10"><path d="M1 1 L4.9 4.6 L1 8.2" fill="none" stroke="#9c9c9c" stroke-width="1.8"/></svg>
<span class="t" style="top:278px;left:61.30px;transform:scaleX(0.9019);transform-origin:0 0;">ALTABLAGE (T:)</span>
<svg style="left:23.3px;top:303.9px" width="8" height="10" viewBox="0 0 8 10"><path d="M1 1 L4.9 4.6 L1 8.2" fill="none" stroke="#9c9c9c" stroke-width="1.8"/></svg>
<span class="t" style="top:302px;left:61.30px;transform:scaleX(1.0189);transform-origin:0 0;">Yvonne.Drabent (\\intern\dfs01\Home) (W:)</span>
<svg style="left:40px;top:110px" width="16" height="12" viewBox="0 0 16 12"><defs><linearGradient id="dk" x1="0" y1="0" x2="1" y2="1"><stop offset="0" stop-color="#1596ef"/><stop offset=".5" stop-color="#2ba6f7"/><stop offset="1" stop-color="#1290ea"/></linearGradient></defs>
<rect width="16" height="12" fill="url(#dk)"/><rect x="0" y="10" width="16" height="2" fill="#0b63ad"/><rect x="1" y="10.2" width="1" height="1" fill="#fff"/><rect x="12" y="10.2" width="1" height="1" fill="#fff"/><rect x="14" y="10.2" width="1" height="1" fill="#fff"/></svg>
<svg style="left:42px;top:132px" width="12" height="16" viewBox="0 0 12 16"><path d="M0.5 0.5 H8.5 L11.5 3.5 V15.5 H0.5Z" fill="#fdfdfd" stroke="#9a9a9a" stroke-width="1"/><path d="M8.5 0.5 V3.5 H11.5" fill="#e4e4e4" stroke="#9a9a9a" stroke-width="0.8"/>
<path d="M2 5 H10 M2 7.2 H10" stroke="#3b8ad8" stroke-width="0.9"/><path d="M2 9.5 H5 M2 11.5 H5 M2 13.5 H10" stroke="#a8a8a8" stroke-width="0.8"/><rect x="6" y="9" width="4" height="3" fill="#5f8f5a"/><path d="M2.5 4 L4 1.8 L5 4" stroke="#3b8ad8" stroke-width="0.8" fill="none"/></svg>
<svg style="left:40px;top:156px" width="16" height="16" viewBox="0 0 16 16"><path d="M5 0 H11 V7.6 H16 L8 16 L0 7.6 H5Z" fill="#3d8fdf"/><path d="M5 0 H11 V7.6 H5Z" fill="#4a9bea"/></svg>
<svg style="left:42px;top:180px" width="12" height="16" viewBox="0 0 12 16"><path d="M5.2 0 C6.4 0 7 1.2 8.6 3 C10.6 5.2 11.6 7.6 9.4 10.6 C10.2 7.6 8.8 5.6 6.9 4.8 V12.6 C6.9 15 4.6 16 2.6 15.8 C0.6 15.6 0 14 0.6 12.8 C1.4 11.2 3.8 10.6 5.2 11.4Z" fill="#18a2f5"/></svg>
<svg style="left:41px;top:205px" width="14" height="15" viewBox="0 0 14 15"><rect width="14" height="15" fill="#3a3a3a"/><rect x="0.4" y="0.4" width="13.2" height="14.2" fill="none" stroke="#8a8a8a" stroke-width="0.8"/>
<g fill="#f2f2f2"><rect x="1" y="1.2" width="1.4" height="1.4"/><rect x="1" y="3.9" width="1.4" height="1.4"/><rect x="1" y="6.6" width="1.4" height="1.4"/><rect x="1" y="9.3" width="1.4" height="1.4"/><rect x="1" y="12" width="1.4" height="1.4"/>
<rect x="11.6" y="1.2" width="1.4" height="1.4"/><rect x="11.6" y="3.9" width="1.4" height="1.4"/><rect x="11.6" y="6.6" width="1.4" height="1.4"/><rect x="11.6" y="9.3" width="1.4" height="1.4"/><rect x="11.6" y="12" width="1.4" height="1.4"/></g>
<rect x="3.2" y="1.2" width="7.6" height="6" fill="#4a7fd6"/><rect x="3.2" y="8" width="7.6" height="6" fill="#4a7fd6"/><rect x="3.2" y="5" width="7.6" height="2.2" fill="#3fa34a"/><rect x="3.2" y="12" width="7.6" height="2" fill="#3fa34a"/><circle cx="8.4" cy="3.4" r="1.5" fill="#f0c419"/><rect x="4" y="3.6" width="2" height="1.6" fill="#e0503c"/><circle cx="8.6" cy="10.4" r="1.2" fill="#f0c419"/></svg>
<svg style="left:41px;top:231px" width="14" height="13" viewBox="0 0 14 13"><defs><linearGradient id="dvg" x1="0" y1="0" x2="0" y2="1"><stop offset="0" stop-color="#eef0f2"/><stop offset="1" stop-color="#c9ced3"/></linearGradient></defs><path d="M1.6 0 H12.4 L14 3.9 H0Z" fill="url(#dvg)"/><rect x="0" y="3.8" width="14" height="3.7" fill="#2f2f2f"/><rect x="0" y="3.8" width="14" height="0.7" fill="#5a5a5a"/><rect x="9.4" y="4.9" width="2.2" height="1.4" fill="#3fe04f"/><rect x="5" y="7.5" width="4" height="3" fill="#3dbb4c"/><rect x="0" y="10.4" width="14" height="2.6" fill="#c9c3c9"/><rect x="2" y="10.3" width="10.2" height="2.7" fill="#3dbb4c"/></svg>
<svg style="left:41px;top:255px" width="14" height="13" viewBox="0 0 14 13"><defs><linearGradient id="dvg" x1="0" y1="0" x2="0" y2="1"><stop offset="0" stop-color="#eef0f2"/><stop offset="1" stop-color="#c9ced3"/></linearGradient></defs><path d="M1.6 0 H12.4 L14 3.9 H0Z" fill="url(#dvg)"/><rect x="0" y="3.8" width="14" height="3.7" fill="#2f2f2f"/><rect x="0" y="3.8" width="14" height="0.7" fill="#5a5a5a"/><rect x="9.4" y="4.9" width="2.2" height="1.4" fill="#3fe04f"/><rect x="5" y="7.5" width="4" height="3" fill="#3dbb4c"/><rect x="0" y="10.4" width="14" height="2.6" fill="#c9c3c9"/><rect x="2" y="10.3" width="10.2" height="2.7" fill="#3dbb4c"/></svg>
<svg style="left:41px;top:279px" width="14" height="13" viewBox="0 0 14 13"><defs><linearGradient id="dvg" x1="0" y1="0" x2="0" y2="1"><stop offset="0" stop-color="#eef0f2"/><stop offset="1" stop-color="#c9ced3"/></linearGradient></defs><path d="M1.6 0 H12.4 L14 3.9 H0Z" fill="url(#dvg)"/><rect x="0" y="3.8" width="14" height="3.7" fill="#2f2f2f"/><rect x="0" y="3.8" width="14" height="0.7" fill="#5a5a5a"/><rect x="9.4" y="4.9" width="2.2" height="1.4" fill="#3fe04f"/><rect x="5" y="7.5" width="4" height="3" fill="#3dbb4c"/><rect x="0" y="10.4" width="14" height="2.6" fill="#c9c3c9"/><rect x="2" y="10.3" width="10.2" height="2.7" fill="#3dbb4c"/></svg>
<svg style="left:41px;top:303px" width="14" height="13" viewBox="0 0 14 13"><defs><linearGradient id="dvg" x1="0" y1="0" x2="0" y2="1"><stop offset="0" stop-color="#eef0f2"/><stop offset="1" stop-color="#c9ced3"/></linearGradient></defs><path d="M1.6 0 H12.4 L14 3.9 H0Z" fill="url(#dvg)"/><rect x="0" y="3.8" width="14" height="3.7" fill="#2f2f2f"/><rect x="0" y="3.8" width="14" height="0.7" fill="#5a5a5a"/><rect x="9.4" y="4.9" width="2.2" height="1.4" fill="#3fe04f"/><rect x="5" y="7.5" width="4" height="3" fill="#3dbb4c"/><rect x="0" y="10.4" width="14" height="2.6" fill="#c9c3c9"/><rect x="2" y="10.3" width="10.2" height="2.7" fill="#3dbb4c"/></svg>
<div class="a" style="left:390px;top:104px;width:15px;height:242px;background:#f0f0f0"></div>
<div class="a" style="left:390px;top:236px;width:15px;height:93px;background:#cdcdcd"></div>
<svg style="left:393.0px;top:110.0px" width="9" height="7"><path d="M1 5.2 L4.5 1.7 L8 5.2" fill="none" stroke="#505050" stroke-width="1.9"/></svg>
<svg style="left:393.0px;top:334.5px" width="9" height="7"><path d="M1 1.7 L4.5 5.2 L8 1.7" fill="none" stroke="#505050" stroke-width="1.9"/></svg>
<div class="a" style="left:405px;top:104px;width:5px;height:242px;background:#fff"></div>
<div class="a" style="left:405px;top:104px;width:1px;height:242px;background:#f6f6f6"></div>
<span class="t" style="top:111px;left:428.00px;transform:scaleX(0.9745);transform-origin:0 0;color:#4c607a;">Name</span>
<span class="t" style="top:111px;left:688.30px;transform:scaleX(1.0109);transform-origin:0 0;color:#4c607a;">Änderungsdatum</span>
<span class="t" style="top:111px;left:831.80px;transform:scaleX(0.9409);transform-origin:0 0;color:#4c607a;">Typ</span>
<div class="a" style="left:682px;top:104px;width:1px;height:24px;background:#e5e5e5"></div>
<div class="a" style="left:825px;top:104px;width:1px;height:24px;background:#e5e5e5"></div>
<svg style="left:547px;top:103.5px" width="9" height="6"><path d="M0.6 4.6 L4.5 0.8 L8.4 4.6" fill="none" stroke="#555" stroke-width="1.2"/></svg>
<svg style="left:430px;top:137px" width="13" height="16" viewBox="0 0 13 16"><defs><linearGradient id="fg" x1="0" y1="0" x2="1" y2="1"><stop offset="0" stop-color="#fdeaa5"/><stop offset="1" stop-color="#f9d772"/></linearGradient></defs><rect x="0.4" y="0.4" width="11.2" height="15.2" fill="url(#fg)" stroke="#eac55a" stroke-width="0.8"/><path d="M10.2 15.6 V10.4 Q10.2 9.4 11.2 9.4 H12.6 V15.6Z" fill="#fbe08a" stroke="#eac55a" stroke-width="0.8"/></svg>
<span class="t" style="top:140px;left:448.30px;transform:scaleX(0.9934);transform-origin:0 0;">Archiv und Backup</span>
<span class="t" style="top:140px;left:688.30px;transform:scaleX(0.8959);transform-origin:0 0;color:#6d6d6d;">22.07.2024 09:37</span>
<span class="t" style="top:140px;left:832.50px;transform:scaleX(0.9758);transform-origin:0 0;color:#6d6d6d;">Dateiordne</span>
<svg style="left:430px;top:158px" width="13" height="16" viewBox="0 0 13 16"><defs><linearGradient id="fg" x1="0" y1="0" x2="1" y2="1"><stop offset="0" stop-color="#fdeaa5"/><stop offset="1" stop-color="#f9d772"/></linearGradient></defs><rect x="0.4" y="0.4" width="11.2" height="15.2" fill="url(#fg)" stroke="#eac55a" stroke-width="0.8"/><path d="M10.2 15.6 V10.4 Q10.2 9.4 11.2 9.4 H12.6 V15.6Z" fill="#fbe08a" stroke="#eac55a" stroke-width="0.8"/></svg>
<span class="t" style="top:161px;left:448.30px;transform:scaleX(0.9600);transform-origin:0 0;">Branchenschlüssel</span>
<span class="t" style="top:161px;left:688.30px;transform:scaleX(0.8959);transform-origin:0 0;color:#6d6d6d;">18.07.2025 09:35</span>
<span class="t" style="top:161px;left:832.50px;transform:scaleX(0.9758);transform-origin:0 0;color:#6d6d6d;">Dateiordne</span>
<svg style="left:430px;top:179px" width="13" height="16" viewBox="0 0 13 16"><defs><linearGradient id="fg" x1="0" y1="0" x2="1" y2="1"><stop offset="0" stop-color="#fdeaa5"/><stop offset="1" stop-color="#f9d772"/></linearGradient></defs><rect x="0.4" y="0.4" width="11.2" height="15.2" fill="url(#fg)" stroke="#eac55a" stroke-width="0.8"/><path d="M10.2 15.6 V10.4 Q10.2 9.4 11.2 9.4 H12.6 V15.6Z" fill="#fbe08a" stroke="#eac55a" stroke-width="0.8"/></svg>
<span class="t" style="top:182px;left:448.30px;transform:scaleX(0.9850);transform-origin:0 0;">Cloud Sicherung</span>
<span class="t" style="top:182px;left:688.30px;transform:scaleX(0.8959);transform-origin:0 0;color:#6d6d6d;">31.10.2024 10:27</span>
<span class="t" style="top:182px;left:832.50px;transform:scaleX(0.9758);transform-origin:0 0;color:#6d6d6d;">Dateiordne</span>
<svg style="left:430px;top:200px" width="13" height="16" viewBox="0 0 13 16"><defs><linearGradient id="fg" x1="0" y1="0" x2="1" y2="1"><stop offset="0" stop-color="#fdeaa5"/><stop offset="1" stop-color="#f9d772"/></linearGradient></defs><rect x="0.4" y="0.4" width="11.2" height="15.2" fill="url(#fg)" stroke="#eac55a" stroke-width="0.8"/><path d="M10.2 15.6 V10.4 Q10.2 9.4 11.2 9.4 H12.6 V15.6Z" fill="#fbe08a" stroke="#eac55a" stroke-width="0.8"/></svg>
<span class="t" style="top:203px;left:448.30px;">Datenraum Connector</span>
<span class="t" style="top:203px;left:688.30px;transform:scaleX(0.8959);transform-origin:0 0;color:#6d6d6d;">30.07.2025 09:24</span>
<span class="t" style="top:203px;left:832.50px;transform:scaleX(0.9758);transform-origin:0 0;color:#6d6d6d;">Dateiordne</span>
<svg style="left:430px;top:221px" width="13" height="16" viewBox="0 0 13 16"><defs><linearGradient id="fg" x1="0" y1="0" x2="1" y2="1"><stop offset="0" stop-color="#fdeaa5"/><stop offset="1" stop-color="#f9d772"/></linearGradient></defs><rect x="0.4" y="0.4" width="11.2" height="15.2" fill="url(#fg)" stroke="#eac55a" stroke-width="0.8"/><path d="M10.2 15.6 V10.4 Q10.2 9.4 11.2 9.4 H12.6 V15.6Z" fill="#fbe08a" stroke="#eac55a" stroke-width="0.8"/></svg>
<span class="t" style="top:224px;left:448.30px;transform:scaleX(0.9887);transform-origin:0 0;">digitaler Bescheidabruf</span>
<span class="t" style="top:224px;left:688.30px;transform:scaleX(0.9046);transform-origin:0 0;color:#6d6d6d;">12.11.2025 16:55</span>
<span class="t" style="top:224px;left:832.50px;transform:scaleX(0.9758);transform-origin:0 0;color:#6d6d6d;">Dateiordne</span>
<svg style="left:430px;top:242px" width="13" height="16" viewBox="0 0 13 16"><defs><linearGradient id="fg" x1="0" y1="0" x2="1" y2="1"><stop offset="0" stop-color="#fdeaa5"/><stop offset="1" stop-color="#f9d772"/></linearGradient></defs><rect x="0.4" y="0.4" width="11.2" height="15.2" fill="url(#fg)" stroke="#eac55a" stroke-width="0.8"/><path d="M10.2 15.6 V10.4 Q10.2 9.4 11.2 9.4 H12.6 V15.6Z" fill="#fbe08a" stroke="#eac55a" stroke-width="0.8"/></svg>
<span class="t" style="top:245px;left:448.30px;transform:scaleX(0.9261);transform-origin:0 0;">DMS</span>
<span class="t" style="top:245px;left:688.30px;transform:scaleX(0.8959);transform-origin:0 0;color:#6d6d6d;">24.07.2025 13:01</span>
<span class="t" style="top:245px;left:832.50px;transform:scaleX(0.9758);transform-origin:0 0;color:#6d6d6d;">Dateiordne</span>
<svg style="left:430px;top:263px" width="13" height="16" viewBox="0 0 13 16"><defs><linearGradient id="fg" x1="0" y1="0" x2="1" y2="1"><stop offset="0" stop-color="#fdeaa5"/><stop offset="1" stop-color="#f9d772"/></linearGradient></defs><rect x="0.4" y="0.4" width="11.2" height="15.2" fill="url(#fg)" stroke="#eac55a" stroke-width="0.8"/><path d="M10.2 15.6 V10.4 Q10.2 9.4 11.2 9.4 H12.6 V15.6Z" fill="#fbe08a" stroke="#eac55a" stroke-width="0.8"/></svg>
<span class="t" style="top:266px;left:448.30px;transform:scaleX(0.9281);transform-origin:0 0;">DMSSCAN</span>
<span class="t" style="top:266px;left:688.30px;transform:scaleX(0.9046);transform-origin:0 0;color:#6d6d6d;">21.11.2025 10:48</span>
<span class="t" style="top:266px;left:832.50px;transform:scaleX(0.9758);transform-origin:0 0;color:#6d6d6d;">Dateiordne</span>
<svg style="left:430px;top:284px" width="13" height="16" viewBox="0 0 13 16"><defs><linearGradient id="fg" x1="0" y1="0" x2="1" y2="1"><stop offset="0" stop-color="#fdeaa5"/><stop offset="1" stop-color="#f9d772"/></linearGradient></defs><rect x="0.4" y="0.4" width="11.2" height="15.2" fill="url(#fg)" stroke="#eac55a" stroke-width="0.8"/><path d="M10.2 15.6 V10.4 Q10.2 9.4 11.2 9.4 H12.6 V15.6Z" fill="#fbe08a" stroke="#eac55a" stroke-width="0.8"/></svg>
<span class="t" style="top:287px;left:448.30px;transform:scaleX(0.9925);transform-origin:0 0;">Drooms</span>
<span class="t" style="top:287px;left:688.30px;transform:scaleX(0.8959);transform-origin:0 0;color:#6d6d6d;">22.04.2025 08:44</span>
<span class="t" style="top:287px;left:832.50px;transform:scaleX(0.9758);transform-origin:0 0;color:#6d6d6d;">Dateiordne</span>
<svg style="left:430px;top:305px" width="13" height="16" viewBox="0 0 13 16"><defs><linearGradient id="fg" x1="0" y1="0" x2="1" y2="1"><stop offset="0" stop-color="#fdeaa5"/><stop offset="1" stop-color="#f9d772"/></linearGradient></defs><rect x="0.4" y="0.4" width="11.2" height="15.2" fill="url(#fg)" stroke="#eac55a" stroke-width="0.8"/><path d="M10.2 15.6 V10.4 Q10.2 9.4 11.2 9.4 H12.6 V15.6Z" fill="#fbe08a" stroke="#eac55a" stroke-width="0.8"/></svg>
<span class="t" style="top:308px;left:448.30px;transform:scaleX(1.0059);transform-origin:0 0;">eigene Anleitungen</span>
<span class="t" style="top:308px;left:688.30px;transform:scaleX(0.8959);transform-origin:0 0;color:#6d6d6d;">31.10.2025 16:19</span>
<span class="t" style="top:308px;left:832.50px;transform:scaleX(0.9758);transform-origin:0 0;color:#6d6d6d;">Dateiordne</span>
<svg style="left:430px;top:326px;clip-path:inset(0 0 12px 0)" width="13" height="16" viewBox="0 0 13 16"><defs><linearGradient id="fg" x1="0" y1="0" x2="1" y2="1"><stop offset="0" stop-color="#fdeaa5"/><stop offset="1" stop-color="#f9d772"/></linearGradient></defs><rect x="0.4" y="0.4" width="11.2" height="15.2" fill="url(#fg)" stroke="#eac55a" stroke-width="0.8"/><path d="M10.2 15.6 V10.4 Q10.2 9.4 11.2 9.4 H12.6 V15.6Z" fill="#fbe08a" stroke="#eac55a" stroke-width="0.8"/></svg>
<div class="a" style="left:892px;top:104px;width:15px;height:226px;background:#f0f0f0"></div>
<div class="a" style="left:892px;top:121px;width:15px;height:54px;background:#cdcdcd"></div>
<svg style="left:895.0px;top:110.0px" width="9" height="7"><path d="M1 5.2 L4.5 1.7 L8 5.2" fill="none" stroke="#505050" stroke-width="1.9"/></svg>
<svg style="left:895.0px;top:317.0px" width="9" height="7"><path d="M1 1.7 L4.5 5.2 L8 1.7" fill="none" stroke="#505050" stroke-width="1.9"/></svg>
<div class="a" style="left:410px;top:330px;width:482px;height:16px;background:#f0f0f0"></div>
<div class="a" style="left:427px;top:330px;width:343px;height:15px;background:#cdcdcd"></div>
<svg style="left:414.5px;top:333.0px" width="7" height="9"><path d="M5.2 1 L1.7 4.5 L5.2 8" fill="none" stroke="#505050" stroke-width="1.9"/></svg>
<svg style="left:879.0px;top:333.0px" width="7" height="9"><path d="M1.7 1 L5.2 4.5 L1.7 8" fill="none" stroke="#505050" stroke-width="1.9"/></svg>
<div class="a" style="left:892px;top:330px;width:16px;height:16px;background:#fff"></div>
<span class="t" style="top:363px;left:68.30px;transform:scaleX(0.9662);transform-origin:0 0;">Dateiname:</span>
<div class="a" style="left:133px;top:357px;width:770px;height:23px;border:1px solid #7a7a7a;background:#fff"></div>
<span class="t" style="top:362px;left:139.20px;transform:scaleX(1.0049);transform-origin:0 0;">Einladungscode - Arbeitnehmer online</span>
<span class="t" style="top:388px;left:81.20px;transform:scaleX(0.9797);transform-origin:0 0;">Dateityp:</span>
<div class="a" style="left:133px;top:382px;width:770px;height:23px;border:1px solid #adadad;background:#e1e1e1"></div>
<span class="t" style="top:388px;left:137.00px;transform:scaleX(0.8995);transform-origin:0 0;">PDF24 Reader</span>
<svg style="left:889px;top:365.5px" width="10" height="7"><path d="M1 1 L5 5 L9 1" fill="none" stroke="#4a4a4a" stroke-width="1.25"/></svg>
<svg style="left:889px;top:390.5px" width="10" height="7"><path d="M1 1 L5 5 L9 1" fill="none" stroke="#4a4a4a" stroke-width="1.25"/></svg>
<svg style="left:20px;top:472.2px" width="11" height="8"><path d="M1.4 6.2 L5.4 2.1 L9.4 6.2" fill="none" stroke="#444" stroke-width="2"/></svg>
<span class="t" style="top:470px;left:38.20px;transform:scaleX(0.9762);transform-origin:0 0;">Ordner ausblenden</span>
<div class="a" style="left:700px;top:461px;width:90px;height:24px;border:1px solid #0078d7;background:#e5f1fb"></div>
<span class="t" style="top:467px;left:718.80px;transform:scaleX(0.9621);transform-origin:0 0;">Speichern</span>
<div class="a" style="left:804px;top:461px;width:86px;height:24px;border:1px solid #adadad;background:#e1e1e1"></div>
<span class="t" style="top:467px;left:818.00px;transform:scaleX(0.9957);transform-origin:0 0;">Abbrechen</span>
<svg style="left:896px;top:487px" width="11" height="11"><g fill="#b8b8b8"><rect x="8" y="8" width="2" height="2"/><rect x="8" y="4.7" width="2" height="2"/><rect x="8" y="1.4" width="2" height="2"/><rect x="4.7" y="8" width="2" height="2"/><rect x="4.7" y="4.7" width="2" height="2"/><rect x="1.4" y="8" width="2" height="2"/></g></svg>
<!-- red frame -->
<div class="a" style="left:0;top:0;width:1920px;height:1080px;border:3px solid #ff0000;pointer-events:none"></div>
<!-- ===== share bar ===== -->
<div class="a" style="left:849px;top:9px;width:221px;height:18px;border-radius:5px;background:#fafafa;box-shadow:0 2px 5px rgba(0,0,0,.28);overflow:hidden"><div class="a" style="left:148px;top:0;width:73px;height:18px;background:#d13438"></div></div>
<svg style="left:855px;top:14px" width="6" height="8"><g fill="#b5b5b5"><rect x="0.6" y="0.5" width="1.2" height="1.2"/><rect x="3.8" y="0.5" width="1.2" height="1.2"/><rect x="0.6" y="3.3" width="1.2" height="1.2"/><rect x="3.8" y="3.3" width="1.2" height="1.2"/><rect x="0.6" y="6.1" width="1.2" height="1.2"/><rect x="3.8" y="6.1" width="1.2" height="1.2"/></g></svg>
<span class="t" style="top:14px;left:873.20px;transform:scaleX(0.9834);transform-origin:0 0;font-size:9.5px;color:#2e2e2e;">Sie teilen Ihren Bildschirm.</span>
<span class="t" style="top:14px;left:1003.80px;transform:scaleX(0.9375);transform-origin:0 0;font-size:9.5px;color:#fff;font-weight:700;">Teilen beend...</span>
<div class="a" style="left:900.5px;top:0;width:119.5px;height:14.6px;background:#191919;border-radius:0 0 6px 6px"></div>
<svg style="left:900px;top:0" width="120" height="15"><rect x="4.0" y="3.2" width="2" height="2" fill="#f2f2f2"/><rect x="4.0" y="6.9" width="2" height="2" fill="#f2f2f2"/><rect x="4.0" y="10.8" width="2" height="2" fill="#f2f2f2"/><rect x="10.0" y="3.2" width="2" height="2" fill="#f2f2f2"/><rect x="10.0" y="6.9" width="2" height="2" fill="#f2f2f2"/><rect x="10.0" y="10.8" width="2" height="2" fill="#f2f2f2"/><rect x="16.0" y="3.2" width="2" height="2" fill="#f2f2f2"/><rect x="16.0" y="6.9" width="2" height="2" fill="#f2f2f2"/><rect x="16.0" y="10.8" width="2" height="2" fill="#f2f2f2"/><rect x="22.0" y="3.2" width="2" height="2" fill="#f2f2f2"/><rect x="22.0" y="6.9" width="2" height="2" fill="#f2f2f2"/><rect x="22.0" y="10.8" width="2" height="2" fill="#f2f2f2"/><rect x="28.0" y="3.2" width="2" height="2" fill="#f2f2f2"/><rect x="28.0" y="6.9" width="2" height="2" fill="#f2f2f2"/><rect x="28.0" y="10.8" width="2" height="2" fill="#f2f2f2"/><rect x="90.0" y="3.2" width="2" height="2" fill="#f2f2f2"/><rect x="90.0" y="6.9" width="2" height="2" fill="#f2f2f2"/><rect x="90.0" y="10.8" width="2" height="2" fill="#f2f2f2"/><rect x="96.0" y="3.2" width="2" height="2" fill="#f2f2f2"/><rect x="96.0" y="6.9" width="2" height="2" fill="#f2f2f2"/><rect x="96.0" y="10.8" width="2" height="2" fill="#f2f2f2"/><rect x="102.0" y="3.2" width="2" height="2" fill="#f2f2f2"/><rect x="102.0" y="6.9" width="2" height="2" fill="#f2f2f2"/><rect x="102.0" y="10.8" width="2" height="2" fill="#f2f2f2"/><rect x="108.0" y="3.2" width="2" height="2" fill="#f2f2f2"/><rect x="108.0" y="6.9" width="2" height="2" fill="#f2f2f2"/><rect x="108.0" y="10.8" width="2" height="2" fill="#f2f2f2"/><rect x="114.0" y="3.2" width="2" height="2" fill="#f2f2f2"/><rect x="114.0" y="6.9" width="2" height="2" fill="#f2f2f2"/><rect x="114.0" y="10.8" width="2" height="2" fill="#f2f2f2"/><path d="M54.8 5.4 L60 10.6 L65.2 5.4" fill="none" stroke="#fff" stroke-width="1.4"/></svg>
</body></html>
